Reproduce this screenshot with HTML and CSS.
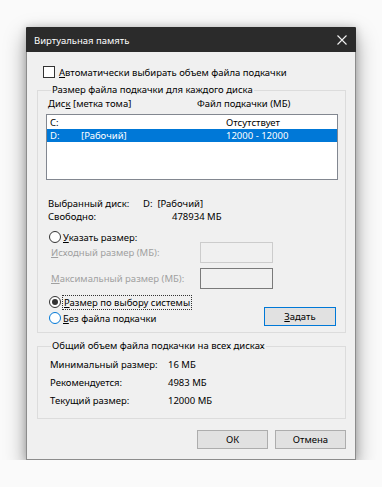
FILE: index.html
```html
<!DOCTYPE html>
<html lang="ru">
<head>
    <meta charset="UTF-8">
    <title>Виртуальная память</title>
    <link rel="stylesheet" href="styles.css">
</head>
<body>
  <div class="window">
    <div class="titlebar">
      <span class="title">Виртуальная память</span>
      <svg class="close" width="10" height="10" viewBox="0 0 10 10">
        <path d="M0.5 0.5 L9.5 9.5 M9.5 0.5 L0.5 9.5" stroke="#f2f2f2" stroke-width="1.1" fill="none"/>
      </svg>
    </div>

    <div class="content">
      <div class="check-row">
        <span class="checkbox"></span>
        <span><u>А</u>втоматически выбирать объем файла подкачки</span>
      </div>

      <fieldset class="group group-disks">
        <legend>Размер файла подкачки для каждого диска</legend>

        <div class="list-head">
          <span class="col-disk">Дис<u>к</u> [метка тома]</span>
          <span>Файл подкачки (МБ)</span>
        </div>

        <div class="listbox">
          <div class="row">
            <span class="c1">C:</span><span class="c2"></span><span>Отсутствует</span>
          </div>
          <div class="row selected">
            <span class="c1">D:</span><span class="c2">[Рабочий]</span><span>12000 - 12000</span>
          </div>
        </div>

        <div class="info">
          <div class="info-row"><span class="info-label">Выбранный диск:</span><span>D:&nbsp;&nbsp;[Рабочий]</span></div>
          <div class="info-row"><span class="info-label">Свободно:</span><span class="free">478934 МБ</span></div>
        </div>

        <div class="radio-row first">
          <span class="radio"></span>
          <span><u>У</u>казать размер:</span>
        </div>

        <div class="field-row">
          <span class="field-label disabled"><u>И</u>сходный размер (МБ):</span>
          <span class="field"></span>
        </div>
        <div class="field-row">
          <span class="field-label disabled"><u>М</u>аксимальный размер (МБ):</span>
          <span class="field dark"></span>
        </div>

        <div class="radio-row checked-row">
          <span class="radio checked"></span>
          <span class="focus"><u>Р</u>азмер по выбору системы</span>
        </div>

        <div class="last-row">
          <div class="radio-row">
            <span class="radio hover"></span>
            <span><u>Б</u>ез файла подкачки</span>
          </div>
          <button class="btn default"><u>З</u>адать</button>
        </div>
      </fieldset>

      <fieldset class="group group-total">
        <legend>Общий объем файла подкачки на всех дисках</legend>
        <div class="total-row"><span class="total-label">Минимальный размер:</span><span>16 МБ</span></div>
        <div class="total-row"><span class="total-label">Рекомендуется:</span><span>4983 МБ</span></div>
        <div class="total-row"><span class="total-label">Текущий размер:</span><span>12000 МБ</span></div>
      </fieldset>

      <div class="buttons">
        <button class="btn">ОК</button>
        <button class="btn">Отмена</button>
      </div>
    </div>
  </div>
</body>
</html>
```

FILE: styles.css
```css
body {
  margin: 0;
  background: #fafafa;
  font-family: "Noto Sans", "Liberation Sans", sans-serif;
  font-size: 9.5px;
  color: #000;
}

.window {
  box-sizing: border-box;
  width: 330px;
  height: 433px;
  margin: 27px 0 0 26px;
  background: #f0f0f0;
  border: 1px solid #8c8c8c;
  border-top-color: #2b2b2b;
  box-shadow: 0 9px 20px rgba(0, 0, 0, 0.38), 0 0 8px rgba(0, 0, 0, 0.18);
}

.titlebar {
  height: 24px;
  background: #2b2b2b;
  color: #fff;
  display: flex;
  align-items: center;
  justify-content: space-between;
  padding: 0 9px 0 8px;
  margin: 0 -1px;
}

.title {
  font-size: 9.5px;
}

.content {
  padding: 12px 9px 0 10px;
}

u {
  text-decoration-thickness: 1px;
  text-underline-offset: 1px;
}

.check-row {
  display: flex;
  align-items: center;
  height: 16px;
  padding-left: 6px;
}

.checkbox {
  box-sizing: border-box;
  width: 12px;
  height: 12px;
  border: 1px solid #333;
  background: #fff;
  margin-right: 4px;
}

.group {
  margin: 3px 0 0;
  padding: 0 8px 6px;
  border: 1px solid #dcdcdc;
  min-width: 0;
}

.group legend {
  padding: 0 1px;
  margin-left: 5px;
  line-height: 14px;
}

.list-head {
  display: flex;
  line-height: 14px;
  padding-left: 2px;
}

.col-disk {
  width: 149px;
}

.listbox {
  box-sizing: border-box;
  height: 66px;
  margin-top: 3px;
  margin-right: -1px;
  border: 1px solid #828790;
  background: #fff;
  padding-top: 1px;
}

.row {
  display: flex;
  height: 13px;
  line-height: 13px;
  padding-left: 3px;
}

.row .c1 {
  width: 31px;
}

.row .c2 {
  width: 145px;
}

.row.selected {
  background: #0078d7;
  color: #fff;
}

.info {
  margin-top: 17px;
  padding-left: 2px;
}

.info-row {
  display: flex;
  line-height: 13px;
}

.info-label {
  width: 95px;
}

.free {
  margin-left: 29px;
}

.radio-row {
  display: flex;
  align-items: center;
  height: 14px;
  padding-left: 3px;
}

.radio-row.first {
  margin-top: 8px;
  height: 12px;
}

.radio {
  box-sizing: border-box;
  width: 12px;
  height: 12px;
  border: 1px solid #333;
  border-radius: 50%;
  background: #fff;
  margin-right: 2px;
  display: flex;
  align-items: center;
  justify-content: center;
}

.radio.checked::after {
  content: "";
  width: 6px;
  height: 6px;
  border-radius: 50%;
  background: #333;
}

.radio.hover {
  border-color: #0078d7;
}

.field-row {
  display: flex;
  align-items: center;
  padding-left: 5px;
  margin-top: -1px;
}

.field-row + .field-row {
  margin-top: 5px;
}

.field-label {
  width: 149px;
}

.disabled {
  color: #a0a0a0;
}

.field {
  box-sizing: border-box;
  width: 73px;
  height: 21px;
  border: 1px solid #cccccc;
  background: #f0f0f0;
}

.field.dark {
  border-color: #7a7a7a;
}

.checked-row {
  margin-top: 6px;
}

.focus {
  outline: 1px dotted #333;
  padding: 0 1px;
  line-height: 13px;
}

.last-row {
  display: flex;
  align-items: center;
  justify-content: space-between;
  height: 19px;
  margin-top: -2px;
}

.last-row .radio-row {
  margin-top: 3px;
}

.btn {
  box-sizing: border-box;
  width: 71px;
  height: 19px;
  padding: 0;
  background: #e1e1e1;
  border: 1px solid #adadad;
  font-family: inherit;
  font-size: 9.5px;
  color: #000;
}

.btn.default {
  width: 72px;
  border-color: #0078d7;
  margin-right: 1px;
}

.group-total {
  margin-top: 6px;
  padding-bottom: 8px;
}

.total-row {
  display: flex;
  line-height: 18px;
  padding-left: 4px;
}

.total-row:first-of-type {
  margin-top: 3px;
}

.total-label {
  width: 118px;
}

.buttons {
  display: flex;
  justify-content: flex-end;
  gap: 7px;
  margin-top: 11px;
}
```
